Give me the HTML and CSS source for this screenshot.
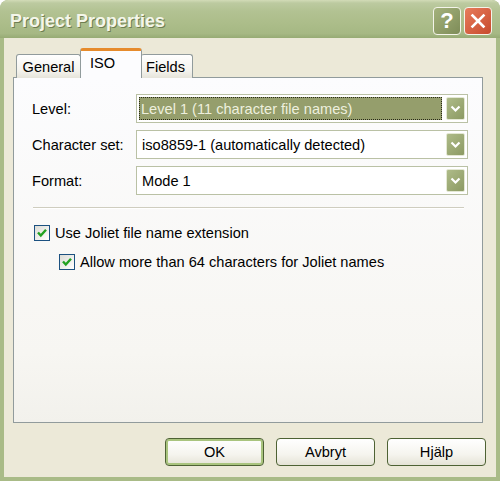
FILE: index.html
```html
<!DOCTYPE html>
<html>
<head>
<meta charset="utf-8">
<link rel="stylesheet" href="styles.css">
</head>
<body>
<div class="window">
  <div class="titlebar">
    <span class="title">Project Properties</span>
    <div class="tb-buttons">
      <div class="tb-btn help">?</div>
      <div class="tb-btn close">
        <svg width="16" height="16" viewBox="0 0 16 16"><path d="M2.5 2.5 L13.5 13.5 M13.5 2.5 L2.5 13.5" stroke="#fff" stroke-width="2.6" stroke-linecap="square"/></svg>
      </div>
    </div>
  </div>
  <div class="client">
    <div class="tabs">
      <div class="tab">General</div>
      <div class="tab active">ISO</div>
      <div class="tab">Fields</div>
    </div>
    <div class="panel">
      <div class="form">
        <span class="label">Level:</span>
        <div class="combo">
          <div class="field"><span class="sel">Level 1 (11 character file names)</span></div>
          <div class="drop"><svg width="11" height="8" viewBox="0 0 11 8"><path d="M1.5 1.5 L5.5 5.5 L9.5 1.5" stroke="#fff" stroke-width="2.2" fill="none"/></svg></div>
        </div>
        <span class="label">Character set:</span>
        <div class="combo">
          <div class="field"><span class="val">iso8859-1 (automatically detected)</span></div>
          <div class="drop"><svg width="11" height="8" viewBox="0 0 11 8"><path d="M1.5 1.5 L5.5 5.5 L9.5 1.5" stroke="#fff" stroke-width="2.2" fill="none"/></svg></div>
        </div>
        <span class="label">Format:</span>
        <div class="combo">
          <div class="field"><span class="val">Mode 1</span></div>
          <div class="drop"><svg width="11" height="8" viewBox="0 0 11 8"><path d="M1.5 1.5 L5.5 5.5 L9.5 1.5" stroke="#fff" stroke-width="2.2" fill="none"/></svg></div>
        </div>
      </div>
      <div class="sep"></div>
      <div class="check">
        <span class="box"><svg width="12" height="12" viewBox="0 0 12 12"><path d="M2 5.5 L4.8 8.5 L10 2.8" stroke="#21a121" stroke-width="2.4" fill="none"/></svg></span>
        <span>Use Joliet file name extension</span>
      </div>
      <div class="check indent">
        <span class="box"><svg width="12" height="12" viewBox="0 0 12 12"><path d="M2 5.5 L4.8 8.5 L10 2.8" stroke="#21a121" stroke-width="2.4" fill="none"/></svg></span>
        <span>Allow more than 64 characters for Joliet names</span>
      </div>
    </div>
    <div class="buttons">
      <div class="btn default">OK</div>
      <div class="btn">Avbryt</div>
      <div class="btn">Hjälp</div>
    </div>
  </div>
</div>
</body>
</html>
```
FILE: styles.css
```css
html, body {
  margin: 0;
  padding: 0;
  background: #ffffff;
}
body {
  font-family: "Liberation Sans", Arial, sans-serif;
  font-size: 14.6px;
  color: #000;
}
.window {
  width: 500px;
  height: 481px;
  box-sizing: border-box;
  display: flex;
  flex-direction: column;
  background: #a9bb87;
  border-radius: 8px 8px 0 0;
  overflow: hidden;
}
.titlebar {
  height: 38px;
  box-sizing: border-box;
  flex: none;
  display: flex;
  align-items: center;
  justify-content: space-between;
  padding: 4px 8px 0 10px;
  background: linear-gradient(#d2dbb7 0, #bccaa0 8%, #b2c292 30%, #acbd8a 60%, #a6b884 88%, #97ab74 100%);
  border-radius: 8px 8px 0 0;
}
.title {
  font-family: "Liberation Sans", Arial, sans-serif;
  font-weight: bold;
  font-size: 18px;
  color: #f4f6ea;
  text-shadow: 1px 1px 0 #6f7e52;
}
.tb-buttons {
  display: flex;
  gap: 3px;
}
.tb-btn {
  width: 28px;
  height: 28px;
  box-sizing: border-box;
  border: 1.5px solid #f4f4ea;
  border-radius: 4px;
  display: flex;
  align-items: center;
  justify-content: center;
  color: #fff;
}
.help {
  background: linear-gradient(135deg, #a4b27c, #7e8c58);
  font-size: 22px;
  font-weight: bold;
}
.close {
  background: linear-gradient(135deg, #e77c5c, #c74a2c);
}
.client {
  flex: 1;
  margin: 0 4px 4px 4px;
  background: #ece9d8;
  padding: 10px 0 0 9px;
  display: flex;
  flex-direction: column;
}
.tabs {
  display: flex;
  align-items: flex-end;
  height: 30px;
  margin-left: 3px;
  position: relative;
  z-index: 1;
  margin-bottom: -1px;
}
.tab {
  height: 24px;
  box-sizing: border-box;
  padding: 0 6px;
  border: 1px solid #919b9c;
  border-bottom: none;
  border-radius: 3px 3px 0 0;
  background: linear-gradient(#ffffff, #f3f2ec 70%, #e6e4da);
  display: flex;
  align-items: center;
  justify-content: center;
}
.tab:first-child { width: 65px; }
.tab:last-child { width: 52px; border-left: none; justify-content: flex-start; padding-left: 5px; }
.tab.active {
  width: 62px;
  height: 30px;
  background: #fcfcfe;
  border-top: 3px solid #e68b2c;
  border-left: 1px solid #919b9c;
  border-right: 1px solid #919b9c;
  align-items: flex-start;
  justify-content: flex-start;
  padding: 4px 0 0 9px;
  margin: 0 -1px;
  position: relative;
  z-index: 2;
}
.panel {
  width: 470px;
  height: 346px;
  box-sizing: border-box;
  border: 1px solid #919b9c;
  background: linear-gradient(#fcfcfe, #f7f6f2 80%, #f2f1ec);
  padding: 16px 14px 0 18px;
}
.form {
  display: grid;
  grid-template-columns: 104px 1fr;
  row-gap: 7px;
  align-items: center;
}
.combo {
  height: 29px;
  box-sizing: border-box;
  border: 1px solid #bac1a5;
  background: #fff;
  display: flex;
  align-items: stretch;
  padding: 2px;
}
.field {
  flex: 1;
  display: flex;
  align-items: center;
  padding-right: 4px;
}
.sel {
  flex: 1;
  align-self: stretch;
  display: flex;
  align-items: center;
  background: #959e6c;
  color: #eef0de;
  outline: 1px dotted #2a2a1a;
  outline-offset: -1px;
  padding-left: 2px;
}
.val {
  padding-left: 3px;
}
.drop {
  width: 19px;
  box-sizing: border-box;
  border: 1px solid #e4e8d4;
  border-radius: 2px;
  background: linear-gradient(135deg, #aebb88, #8c9a63);
  display: flex;
  align-items: center;
  justify-content: center;
}
.sep {
  height: 1px;
  background: #cfcdbf;
  border-bottom: 1px solid #ffffff;
  margin: 12px 4px 15px 1px;
}
.check {
  display: flex;
  align-items: center;
  gap: 5px;
  height: 18px;
  margin-left: 2px;
}
.check.indent {
  margin-left: 27px;
  margin-top: 11px;
}
.box {
  width: 16px;
  height: 16px;
  box-sizing: border-box;
  border: 1px solid #1c5180;
  background: linear-gradient(135deg, #dcdcd5, #ffffff);
  display: flex;
  align-items: center;
  justify-content: center;
}
.buttons {
  display: flex;
  justify-content: flex-end;
  gap: 12px;
  margin-top: 15px;
  padding-right: 10px;
}
.btn {
  width: 99px;
  height: 28px;
  box-sizing: border-box;
  border: 1px solid #4e6234;
  border-radius: 4px;
  background: linear-gradient(#ffffff, #f5f4ee 60%, #e5e3d6);
  display: flex;
  align-items: center;
  justify-content: center;
}
.btn.default {
  box-shadow: inset 0 0 0 2px #a9c47e;
}
```
